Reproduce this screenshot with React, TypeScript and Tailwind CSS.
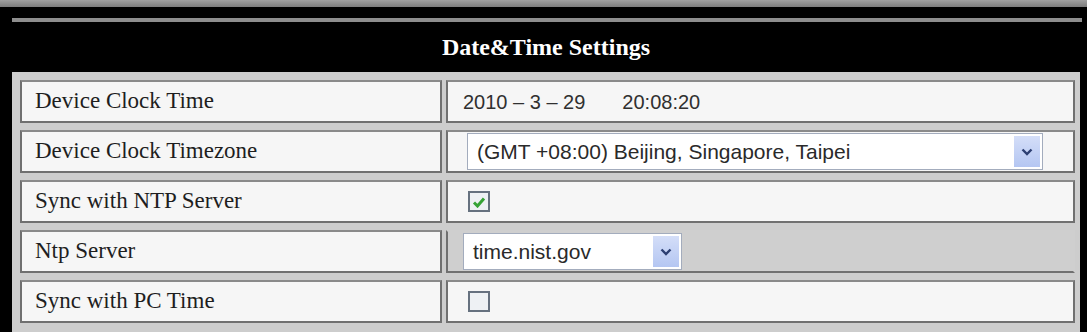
import React from 'react';

const serif = { fontFamily: '"Liberation Serif", "Times New Roman", serif' };
const sans = { fontFamily: '"Liberation Sans", Arial, sans-serif' };

// Chevron used on the old-style select boxes
const Arrow = () => (
    <div className="w-[26px] h-[31px] my-auto mr-[2px] bg-gradient-to-b from-[#d4def8] to-[#b4c6f2] flex items-center justify-center">
        <svg width="12" height="8" viewBox="0 0 12 8">
            <path d="M1.5 1.5 L6 6 L10.5 1.5" fill="none" stroke="#2c3f72" strokeWidth="2.4" />
        </svg>
    </div>
);

const Select = ({ value, width, left }: { value: string; width: string; left: string }) => (
    <div className={`${width} ${left} h-[37px] bg-white border border-[#a3acbd] flex items-stretch`}>
        <div className="flex-1 flex items-center pl-[9px] text-[21px] text-[#2a2a2a] whitespace-nowrap" style={sans}>
            {value}
        </div>
        <Arrow />
    </div>
);

const Checkbox = ({ checked }: { checked?: boolean }) => (
    <div className="ml-[20px] w-[22px] h-[21px] border-2 border-[#66717f] bg-[#eef1f4] flex items-center justify-center">
        {checked && (
            <svg width="14" height="12" viewBox="0 0 14 12">
                <path d="M2 6.5 L5.5 10 L12 2.5" fill="none" stroke="#36a336" strokeWidth="3" />
            </svg>
        )}
    </div>
);

const Label = ({ children }: { children: React.ReactNode }) => (
    <div className="h-[43px] bg-[#f6f6f6] border-2 border-[#707070] border-t-[#8a8a8a] flex items-center pl-[13px] text-[23px] text-[#1e1e1e]" style={serif}>
        {children}
    </div>
);

const Value = ({ children, gray }: { children?: React.ReactNode; gray?: boolean }) => (
    <div className={`h-[43px] border-2 border-[#707070] border-t-[#8a8a8a] flex items-center ${gray ? 'bg-[#cfcfcf] border-r-[#cfcfcf] border-t-[#cfcfcf]' : 'bg-[#f6f6f6]'}`}>
        {children}
    </div>
);

export default function App() {
    return (
        <div className="w-[1087px] h-[332px] bg-black overflow-hidden flex flex-col">
            {/* top strip */}
            <div className="h-[7px] bg-gradient-to-b from-[#a0a0a0] to-[#7c7c7c] shrink-0" />
            <div className="h-[11px] shrink-0" />
            <div className="h-[4px] mx-[12px] mr-[5px] bg-[#8e8e8e] shrink-0" />

            {/* header */}
            <div className="h-[50px] ml-[12px] mr-[7px] flex items-center justify-center shrink-0">
                <span className="text-white font-bold text-[24px]" style={serif}>
                    Date&amp;Time Settings
                </span>
            </div>

            {/* settings table */}
            <div className="flex-1 ml-[12px] mr-[7px] bg-[#cdcdcd] pt-[8px] pl-[8px] pr-[5px]">
                <div className="grid grid-cols-[422px_629px] gap-x-[4px] gap-y-[7px]">
                    <Label>Device Clock Time</Label>
                    <Value>
                        <span className="pl-[15px] text-[20px] text-[#303030]" style={sans}>
                            2010 – 3 – 29<span className="ml-[37px]">20:08:20</span>
                        </span>
                    </Value>

                    <Label>Device Clock Timezone</Label>
                    <Value>
                        <Select value="(GMT +08:00) Beijing, Singapore, Taipei" width="w-[576px]" left="ml-[19px]" />
                    </Value>

                    <Label>Sync with NTP Server</Label>
                    <Value>
                        <Checkbox checked />
                    </Value>

                    <Label>Ntp Server</Label>
                    <Value gray>
                        <Select value="time.nist.gov" width="w-[219px]" left="ml-[15px]" />
                    </Value>

                    <Label>Sync with PC Time</Label>
                    <Value>
                        <Checkbox />
                    </Value>
                </div>
            </div>
        </div>
    );
}
